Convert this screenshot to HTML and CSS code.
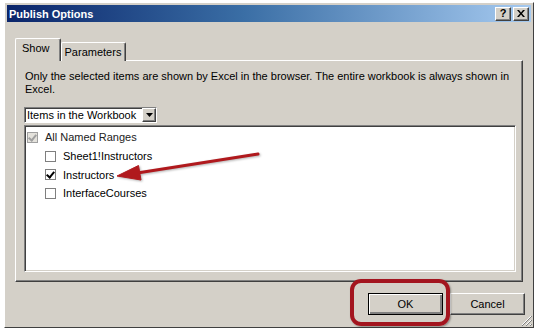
FILE: index.html
```html
<!DOCTYPE html>
<html lang="en">
<head>
  <meta charset="UTF-8" />
  <title>Publish Options</title>
  <link rel="stylesheet" href="styles.css">
</head>
<body>
  <div class="window">
    <div class="titlebar">
      <span class="title">Publish Options</span>
      <div class="caption-btns">
        <span class="cbtn help">?</span>
        <span class="cbtn close">
          <svg width="8" height="7" viewBox="0 0 8 7"><path d="M0 0h2l2 2.5L6 0h2L5 3.5 8 7H6L4 4.5 2 7H0l3-3.5z" fill="#000"/></svg>
        </span>
      </div>
    </div>
    <div class="content">
      <div class="tabs">
        <div class="tab active">Show</div>
        <div class="tab">Parameters</div>
      </div>
      <div class="panel">
        <p class="note">Only the selected items are shown by Excel in the browser. The entire workbook is always shown in Excel.</p>
        <div class="combo">
          <span class="combo-text">Items in the Workbook</span>
          <span class="combo-btn">
            <svg width="7" height="4" viewBox="0 0 7 4"><path d="M0 0h7L3.5 4z" fill="#000"/></svg>
          </span>
        </div>
        <div class="list">
          <div class="item disabled"><span class="cb checked"></span>All Named Ranges</div>
          <div class="item child"><span class="cb"></span>Sheet1!Instructors</div>
          <div class="item child"><span class="cb checked"></span>Instructors</div>
          <div class="item child"><span class="cb"></span>InterfaceCourses</div>
        </div>
      </div>
      <div class="actions">
        <button class="btn default">OK</button>
        <button class="btn">Cancel</button>
      </div>
    </div>
    <svg class="grip" width="11" height="11" viewBox="0 0 11 11">
      <path d="M10 1L1 10M10 5L5 10M10 9L9 10" stroke="#fff" stroke-width="1"/>
      <path d="M11 1L1 11M11 5L5 11M11 9L9 11" stroke="#808080" stroke-width="1"/>
    </svg>
  </div>

  <!-- annotations drawn over the screenshot -->
  <div class="highlight"></div>
  <svg class="arrow" width="540" height="329" viewBox="0 0 540 329">
    <g fill="#b0191d" stroke="#b0191d">
      <line x1="258" y1="154" x2="134" y2="173.5" stroke-width="3" stroke-linecap="round"/>
      <path d="M117 176 L141 180 L138.5 165.5 Z" stroke-width="1" stroke-linejoin="round"/>
    </g>
  </svg>
</body>
</html>
```

FILE: styles.css
```css
* {
  box-sizing: border-box;
}
body {
  margin: 0;
  background: #fff;
  font-family: "Liberation Sans", Arial, sans-serif;
  font-size: 11px;
  color: #000;
}
.window {
  position: relative;
  margin: 2px 0 0 4px;
  width: 530px;
  height: 326px;
  background: #d4d0c8;
  border: 1px solid;
  border-color: #fff #404040 #404040 #fff;
  padding: 2px;
  display: flex;
  flex-direction: column;
}
.titlebar {
  height: 17px;
  display: flex;
  align-items: center;
  justify-content: space-between;
  padding: 0 2px;
  background: linear-gradient(to right, #0a246a 0%, #3a6ea5 45%, #a6caf0 100%);
}
.title {
  color: #fff;
  font-weight: 700;
  font-size: 11px;
}
.caption-btns {
  display: flex;
  gap: 2px;
}
.cbtn {
  width: 16px;
  height: 14px;
  background: #d4d0c8;
  border: 1px solid;
  border-color: #fff #404040 #404040 #fff;
  box-shadow: inset -1px -1px 0 #808080;
  display: flex;
  align-items: center;
  justify-content: center;
  font-weight: 700;
  font-size: 11px;
  line-height: 1;
}
.content {
  flex: 1;
  display: flex;
  flex-direction: column;
  padding: 16px 8px 0 8px;
}
.tabs {
  display: flex;
  align-items: flex-end;
  height: 22px;
}
.tab {
  height: 19px;
  padding: 0 4px 0 3px;
  display: flex;
  align-items: center;
  border: 1px solid;
  border-bottom: none;
  border-color: #fff #404040 #404040 #fff;
  border-radius: 2px 2px 0 0;
  box-shadow: inset -1px 0 0 #808080;
  margin-bottom: -1px;
  position: relative;
  background: #d4d0c8;
}
.tab.active {
  height: 23px;
  padding: 0 10px 4px 6px;
  z-index: 1;
}
.panel {
  height: 222px;
  border: 1px solid;
  border-color: #fff #404040 #404040 #fff;
  box-shadow: inset -1px -1px 0 #808080;
  padding: 9px 6px 9px 8px;
  display: flex;
  flex-direction: column;
}
.note {
  margin: 0;
  line-height: 13px;
  padding-left: 1px;
}
.combo {
  margin-top: 11px;
  width: 133px;
  height: 16px;
  display: flex;
  background: #fff;
  border: 1px solid;
  border-color: #808080 #fff #fff #808080;
  box-shadow: inset 1px 1px 0 #404040;
}
.combo-text {
  flex: 1;
  padding: 0 2px;
  line-height: 14px;
}
.combo-btn {
  width: 14px;
  height: 14px;
  background: #d4d0c8;
  border: 1px solid;
  border-color: #fff #404040 #404040 #fff;
  box-shadow: inset -1px -1px 0 #808080;
  display: flex;
  align-items: center;
  justify-content: center;
}
.list {
  margin-top: 2px;
  flex: 1;
  background: #fff;
  border: 1px solid;
  border-color: #808080 #fff #fff #808080;
  box-shadow: inset 1px 1px 0 #404040, inset -1px -1px 0 #d4d0c8;
  padding: 2px 0 0 2px;
}
.item {
  height: 18.7px;
  display: flex;
  align-items: center;
  gap: 7px;
}
.item.child {
  padding-left: 18px;
}
.item.disabled {
  color: #222;
}
.cb {
  width: 11px;
  height: 11px;
  border: 1px solid #7f7f7f;
  background: #fff;
  position: relative;
}
.cb.checked::after {
  content: "";
  position: absolute;
  left: 2px;
  top: 0;
  width: 3px;
  height: 6px;
  border: solid #000;
  border-width: 0 2px 2px 0;
  transform: rotate(40deg);
}
.disabled .cb {
  background: #e4e2dc;
  border-color: #a0a0a0;
}
.disabled .cb.checked::after {
  border-color: #a0a0a0;
}
.actions {
  display: flex;
  justify-content: flex-end;
  gap: 7px;
  padding: 11px 0 0 0;
  margin-right: -2px;
}
.btn {
  width: 75px;
  height: 22px;
  font-family: inherit;
  font-size: 11px;
  color: #000;
  background: #d4d0c8;
  border: 1px solid;
  border-color: #fff #404040 #404040 #fff;
  box-shadow: inset -1px -1px 0 #808080;
  padding: 0;
}
.btn.default {
  border: 1px solid #000;
  box-shadow: inset 1px 1px 0 #fff, inset -2px -2px 0 #808080;
}
.grip {
  position: absolute;
  right: 1px;
  bottom: 1px;
}
.highlight {
  position: absolute;
  left: 350px;
  top: 279px;
  width: 100px;
  height: 47px;
  border: 4px solid #a3151f;
  border-radius: 11px;
  box-shadow: 1px 1px 2px rgba(0, 0, 0, 0.35);
}
.arrow {
  position: absolute;
  left: 0;
  top: 0;
  filter: drop-shadow(1px 1px 1px rgba(0, 0, 0, 0.3));
}
```
